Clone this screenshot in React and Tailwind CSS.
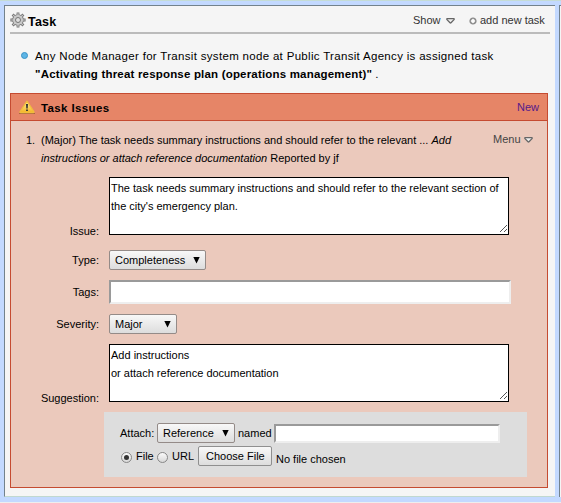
import React from "react";

function Caret() {
  return (
    <svg width="9" height="6" viewBox="0 0 9 6" className="block shrink-0">
      <path d="M1.2 .7H7.8Q8.6 .9 8 1.7L5 4.8Q4.5 5.3 4 4.8L1 1.7Q.4 .9 1.2 .7Z" fill="#eee" stroke="#666" strokeWidth="1.3" />
    </svg>
  );
}

function Gear() {
  return (
    <svg width="16" height="16" viewBox="0 0 16 16" className="block shrink-0">
      <g stroke="#777" strokeWidth="2.8" fill="none">
        <path d="M8 .4V15.6M.4 8H15.6M2.6 2.6L13.4 13.4M13.4 2.6L2.6 13.4" />
      </g>
      <circle cx="8" cy="8" r="5.8" fill="#777" />
      <g stroke="#c8c8c8" strokeWidth="1.2" fill="none">
        <path d="M8 1.2V14.8M1.2 8H14.8M3.2 3.2L12.8 12.8M12.8 3.2L3.2 12.8" />
      </g>
      <circle cx="8" cy="8" r="5" fill="#c9c9c9" />
      <circle cx="8" cy="8" r="2.5" fill="#e0e0e0" stroke="#777" />
    </svg>
  );
}

function Warning() {
  return (
    <svg width="16" height="15" viewBox="0 0 16 15" className="block shrink-0">
      <defs>
        <linearGradient id="warn" x1="0" y1="0" x2="0" y2="1">
          <stop offset="0" stopColor="#fff3a0" />
          <stop offset="1" stopColor="#f5b324" />
        </linearGradient>
      </defs>
      <path d="M0 13.5H16" stroke="#a9653f" strokeWidth="1" />
      <path d="M8 1.2L15 11.8Q15.2 12.6 14.4 12.6H1.6Q.8 12.6 1 11.8Z" fill="url(#warn)" stroke="#f0bd3c" strokeWidth="1.2" strokeLinejoin="round" />
      <path d="M7 4H9L8.7 8.4H7.3ZM7.1 9.4H8.9V11H7.1Z" fill="#333" />
    </svg>
  );
}

function Grip() {
  return (
    <svg width="8" height="8" viewBox="0 0 8 8" className="absolute right-px bottom-px" shapeRendering="crispEdges">
      <path d="M.5 7.5L7.5 .5M4.5 7.5L7.5 4.5" stroke="#555" strokeWidth="1" />
    </svg>
  );
}

function Select({ width, children }) {
  return (
    <div className={`${width} flex h-[20px] shrink-0 items-start justify-between rounded-[2px] border border-[#948b88] bg-linear-to-b from-[#f8f8f8] to-[#dddddd] pr-[5px] pl-[5px]`}>
      <span className="leading-[18px]">{children}</span>
      <svg width="7" height="7" viewBox="0 0 7 7" className="mt-[6px]">
        <path d="M.3 0H6.7L3.5 6.6Z" fill="#000" />
      </svg>
    </div>
  );
}

function TextArea({ children }) {
  return (
    <div className="relative h-[58px] w-[400px] border border-black bg-white pt-px pl-px">
      {children}
      <Grip />
    </div>
  );
}

function Label({ children }) {
  return <div className="w-[88px] shrink-0 text-right">{children}</div>;
}

function Radio({ checked }) {
  return (
    <span className="mt-[6px] flex size-[11px] shrink-0 items-center justify-center rounded-full border border-[#888] bg-linear-to-b from-[#fafafa] to-[#d8d8d8]">
      {checked && <span className="size-[5px] rounded-full bg-[#333]" />}
    </span>
  );
}

export default function App() {
  return (
    <div className="flex h-[503px] w-[561px] flex-col overflow-hidden bg-[#c3d9ff] font-['Liberation_Sans',Arial,sans-serif] text-[11px] leading-[18px] whitespace-nowrap text-black">
      <div className="h-px shrink-0 bg-[#c5dcd5]" />
      <div className="mt-[4px] flex h-[492px] shrink-0 justify-between pl-[4px]">
        <main className="w-[551px] border-t border-l border-b border-t-[#73828c] border-b-[#c0d8d0] border-l-[#73828c] bg-[#f5f5f5] pl-[5px]">
          <header className="flex h-[28px] w-[540px] border-b-2 border-[#bbb] pt-[6px]">
            <Gear />
            <h1 className="ml-[2px] w-[385px] pt-px text-[12.5px] font-bold tracking-[0.2px]">Task</h1>
            <div className="mt-[-1px] flex text-[#333]">
              <span className="w-[27px]">Show</span>
              <span className="mt-[7px] ml-[6px]"><Caret /></span>
              <svg width="8" height="8" viewBox="0 0 8 8" className="mt-[6px] ml-[14px]">
                <circle cx="4" cy="4" r="3" fill="#aaa" stroke="#888" strokeWidth="1.2" />
                <path d="M4 2V6M2 4H6" stroke="#fff" strokeWidth="1.6" />
              </svg>
              <span className="ml-[3px]">add new task</span>
            </div>
          </header>

          <div className="flex h-[53px] pt-[13px] pl-[11px]">
            <span className="mt-[5px] size-[7px] rounded-full border border-[#3a92c6] bg-[#5db5e6]" />
            <p className="ml-[7px] text-[11.5px]">
              <span className="tracking-[0.315px]">Any Node Manager for Transit system node at Public Transit Agency is assigned task</span>
              <br />
              <b className="tracking-[0.185px]">"Activating threat response plan (operations management)"</b> .
            </p>
          </div>

          <section className="mt-[6px] h-[395px] w-[538px] border border-[#c54b31] bg-[#ebc9bc]">
            <div className="flex h-[27px] border-b border-[#c54b31] bg-[#e68567] pl-[8px]">
              <div className="mt-[6px]"><Warning /></div>
              <h2 className="mt-[5px] ml-[6px] w-[476px] text-[11.5px] font-bold tracking-[0.38px]">Task Issues</h2>
              <span className="mt-[4px] text-[#551a8b]">New</span>
            </div>

            <div className="flex h-[56px] pt-[10px] pl-[15px]">
              <span className="w-[15px]">1.</span>
              <p className="w-[452px]">
                (Major) The task needs summary instructions and should refer to the relevant ... <i>Add</i>
                <br />
                <i>instructions or attach reference documentation</i> Reported by jf
              </p>
              <div className="mt-[-1px] flex text-[#444]">
                <span className="w-[27px]">Menu</span>
                <span className="mt-[7px] ml-[4px]"><Caret /></span>
              </div>
            </div>

            <div className="flex h-[58px] gap-[10px]">
              <Label><div className="pt-[45px]">Issue:</div></Label>
              <TextArea>
                The task needs summary instructions and should refer to the relevant section of
                <br />
                the city's emergency plan.
              </TextArea>
            </div>
            <div className="mt-[15px] flex gap-[10px]">
              <Label><div className="pt-px">Type:</div></Label>
              <Select width="w-[97px]">Completeness</Select>
            </div>
            <div className="mt-[10px] flex gap-[10px]">
              <Label><div className="pt-[3px]">Tags:</div></Label>
              <div className="h-[24px] w-[402px] border-2 border-t-[#9a9a9a] border-r-[#eee] border-b-[#eee] border-l-[#9a9a9a] bg-white" />
            </div>
            <div className="mt-[10px] flex gap-[10px]">
              <Label><div className="pt-px">Severity:</div></Label>
              <Select width="w-[68px]">Major</Select>
            </div>
            <div className="mt-[10px] flex h-[58px] gap-[10px]">
              <Label><div className="pt-[45px]">Suggestion:</div></Label>
              <TextArea>
                Add instructions
                <br />
                or attach reference documentation
              </TextArea>
            </div>

            <div className="mt-[10px] ml-[93px] h-[65px] w-[423px] bg-[#ddd] pt-[11px] pl-[16px]">
              <div className="flex">
                <span className="w-[37px] shrink-0 pt-px">Attach:</span>
                <Select width="w-[78px]">Reference</Select>
                <span className="w-[39px] shrink-0 pt-px pl-[3px]">named</span>
                <div className="mt-px h-[19px] w-[226px] shrink-0 border-2 border-t-[#9a9a9a] border-r-[#eee] border-b-[#eee] border-l-[#9a9a9a] bg-white" />
              </div>
              <div className="mt-[3px] flex pl-px">
                <Radio checked />
                <span className="w-[25px] pt-px pl-[4px]">File</span>
                <Radio />
                <span className="w-[30px] pt-px pl-[4px]">URL</span>
                <div className="h-[20px] w-[74px] rounded-[2px] border border-[#8f8f8f] bg-linear-to-b from-[#f8f8f8] to-[#ddd] pl-[7px]">Choose File</div>
                <span className="pt-[4px] pl-[4px]">No file chosen</span>
              </div>
            </div>
          </section>
        </main>
        <div className="w-[2px] border-t border-l border-[#73828c] bg-[#f5f5f5]" />
      </div>
      <div className="mt-[5px] h-px shrink-0 bg-[#eee]" />
    </div>
  );
}
